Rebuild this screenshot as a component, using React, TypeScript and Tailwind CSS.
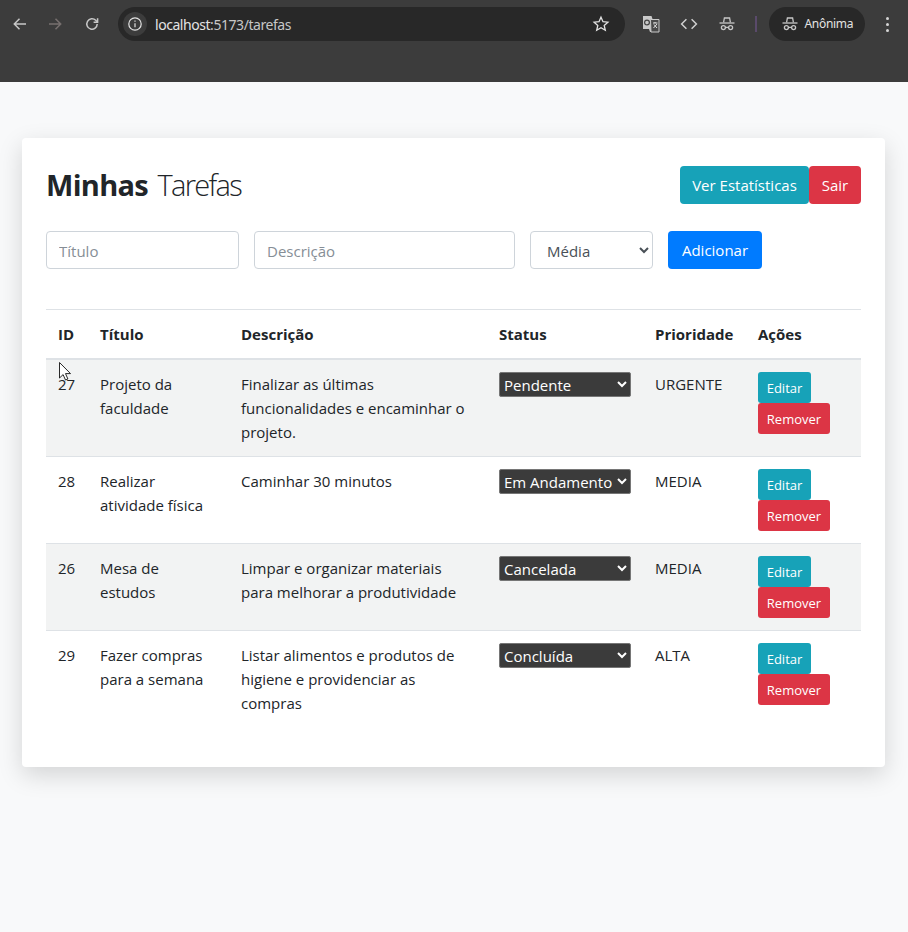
import React from "react";

const Incognito = ({ size = 18, color = "#c7c7c7" }: { size?: number; color?: string }) => (
  <svg width={size} height={size} viewBox="0 0 18 18" fill="none" stroke={color} strokeWidth="1.3">
    <path d="M5.6 7.4 L6.4 3 H11.6 L12.4 7.4" />
    <path d="M1.5 8 H16.5" />
    <circle cx="5.4" cy="12.6" r="2" />
    <circle cx="12.6" cy="12.6" r="2" />
    <path d="M7.4 12.4 H10.6" />
  </svg>
);

const rows = [
  { id: 27, t: "Projeto da faculdade", d: "Finalizar as últimas funcionalidades e encaminhar o projeto.", s: "Pendente", p: "URGENTE", shade: true },
  { id: 28, t: "Realizar atividade física", d: "Caminhar 30 minutos", s: "Em Andamento", p: "MEDIA", shade: false },
  { id: 26, t: "Mesa de estudos", d: "Limpar e organizar materiais para melhorar a produtividade", s: "Cancelada", p: "MEDIA", shade: true },
  { id: 29, t: "Fazer compras para a semana", d: "Listar alimentos e produtos de higiene e providenciar as compras", s: "Concluída", p: "ALTA", shade: false },
];

const statuses = ["Pendente", "Em Andamento", "Cancelada", "Concluída"];

function BrowserBar() {
  return (
    <div className="h-[82px] bg-[#3c3c3c] flex items-start pt-[7px] pl-[11px] pr-[14px] text-[#e3e3e3]">
      <div className="flex items-center h-[34px] gap-[17px]">
        <svg width="18" height="18" viewBox="0 0 18 18" fill="none" stroke="#c7c7c7" strokeWidth="1.5"><path d="M15 9H3.5M8.5 3.8 3.3 9l5.2 5.2" /></svg>
        <svg width="18" height="18" viewBox="0 0 18 18" fill="none" stroke="#77706f" strokeWidth="1.5"><path d="M3 9h11.5M9.5 3.8 14.7 9l-5.2 5.2" /></svg>
        <svg className="ml-[2px]" width="18" height="18" viewBox="0 0 18 18" fill="none" stroke="#c7c7c7" strokeWidth="1.5"><path d="M14.2 9a5.2 5.2 0 1 1-1.5-3.7L14.4 7" /><path d="M14.6 3.2V7.2H10.6" /></svg>
      </div>
      <div className="ml-[17px] w-[507px] h-[34px] rounded-full bg-[#282828] flex items-center pl-[5px] pr-[15px]">
        <div className="w-[24px] h-[24px] rounded-full bg-[#3c3c3c] flex items-center justify-center">
          <svg width="16" height="16" viewBox="0 0 16 16" fill="none" stroke="#e3e3e3" strokeWidth="1.2"><circle cx="8" cy="8" r="6.2" /><path d="M8 7.2v4M8 4.4v1.4" /></svg>
        </div>
        <span className="ml-[8px] text-[14px] text-[#e3e3e3] font-['Noto_Sans',sans-serif] tracking-[-0.45px]">localhost<span className="text-[#c7c7c7]">:5173/tarefas</span></span>
        <svg className="ml-auto" width="18" height="18" viewBox="0 0 18 18" fill="none" stroke="#e3e3e3" strokeWidth="1.3"><path d="M9 2.2l2 4.5 4.9.5-3.7 3.3 1.1 4.8L9 12.8l-4.3 2.5 1.1-4.8L2.1 7.2 7 6.7z" /></svg>
      </div>
      <div className="ml-[17px] h-[34px] flex items-center">
        <svg width="18" height="18" viewBox="0 0 18 18"><path d="M1 1h8.5l1 3H17v13H8l-1-3H1z" fill="#c9c9c9" /><path d="M8.5 4.5H17V17H9z" fill="#4a4a4a" stroke="#c9c9c9" /><circle cx="5" cy="7.5" r="2.4" fill="none" stroke="#444" strokeWidth="1.2" /><path d="M11 8h4.5M13 7v1M11.5 13l3.5-4M12 9.5l3 3.5" stroke="#e3e3e3" strokeWidth="1" fill="none" /></svg>
        <svg className="ml-[20px]" width="18" height="18" viewBox="0 0 18 18" fill="none" stroke="#d0d0d0" strokeWidth="1.5"><path d="M6.4 4.2 1.6 9l4.8 4.8M11.6 4.2 16.4 9l-4.8 4.8" /></svg>
        <span className="ml-[20px] flex"><Incognito /></span>
        <div className="ml-[19px] w-[1.5px] h-[16px] bg-[#5a4a6b]" />
      </div>
      <div className="ml-[12px] w-[96px] h-[34px] rounded-full bg-[#282828] flex items-center pl-[12px] gap-[6px]">
        <Incognito />
        <span className="text-[12px] text-[#e3e3e3] font-['Noto_Sans',sans-serif] tracking-[-0.3px]">Anônima</span>
      </div>
      <div className="ml-[21px] h-[34px] flex flex-col items-center justify-center gap-[3px]">
        <span className="w-[3px] h-[3px] rounded-full bg-[#d5d5d5]" />
        <span className="w-[3px] h-[3px] rounded-full bg-[#d5d5d5]" />
        <span className="w-[3px] h-[3px] rounded-full bg-[#d5d5d5]" />
      </div>
    </div>
  );
}

export default function App() {
  return (
    <div className="w-[908px] h-[932px] overflow-hidden bg-[#f8f9fa] relative font-['Open_Sans','Noto_Sans',sans-serif] text-[#212529]">
      <BrowserBar />
      <div className="mt-[56px] mx-[22px] w-[863px] h-[629px] bg-white rounded-[4px] shadow-[0_8px_24px_rgba(0,0,0,0.15)] pt-[28px] px-[24px]">
        <div className="flex items-center justify-between h-[38px]">
          <h1 className="text-[29px] leading-[38px] font-['Open_Sans',sans-serif]">
            <span className="font-bold tracking-[-0.7px]">Minhas</span> <span className="font-light tracking-[-1.7px] ml-[2px]">Tarefas</span>
          </h1>
          <div className="flex">
            <button className="h-[38px] w-[129px] bg-[#17a2b8] text-white text-[15px] rounded-[4px]">Ver Estatísticas</button>
            <button className="h-[38px] w-[52px] bg-[#dc3545] text-white text-[15px] rounded-[4px]">Sair</button>
          </div>
        </div>
        <div className="flex mt-[27px] h-[38px]">
          <input placeholder="Título" className="w-[193px] h-[38px] border border-[#ced4da] rounded-[4px] px-[12px] pt-[1px] text-[15px] placeholder:text-[#868e96] outline-none" />
          <input placeholder="Descrição" className="ml-[15px] w-[261px] h-[38px] border border-[#ced4da] rounded-[4px] px-[12px] pt-[1px] text-[15px] placeholder:text-[#868e96] outline-none" />
          <select defaultValue="Média" className="ml-[15px] w-[123px] h-[38px] border border-[#ced4da] rounded-[4px] pl-[12px] pt-[1px] text-[15px] text-[#495057] bg-white outline-none">
            <option>Média</option>
          </select>
          <button className="ml-[15px] w-[94px] h-[38px] bg-[#007bff] text-white text-[15px] rounded-[4px]">Adicionar</button>
        </div>
        <table className="mt-[40px] w-[815px] table-fixed border-collapse text-[15px] leading-[24px]">
          <colgroup>
            <col className="w-[42px]" />
            <col className="w-[141px]" />
            <col className="w-[258px]" />
            <col className="w-[156px]" />
            <col className="w-[103px]" />
            <col className="w-[115px]" />
          </colgroup>
          <thead>
            <tr className="border-t border-[#dee2e6] border-b-2 h-[49px]">
              {["ID", "Título", "Descrição", "Status", "Prioridade", "Ações"].map((h) => (
                <th key={h} className="px-[12px] text-left align-middle font-bold whitespace-nowrap">{h}</th>
              ))}
            </tr>
          </thead>
          <tbody>
            {rows.map((r, i) => (
              <tr key={r.id} className={`${r.shade ? "bg-[#f2f3f3]" : "bg-white"} ${i < 3 ? "border-b border-[#dee2e6]" : ""} align-top`}>
                <td className="px-[12px] py-[12px]">{r.id}</td>
                <td className="px-[12px] py-[12px]">{r.t}</td>
                <td className="px-[12px] py-[12px]">{r.d}</td>
                <td className="px-[12px] py-[12px]">
                  <select defaultValue={r.s} className="block w-[132px] h-[25px] pt-[1px] bg-[#3b3b3b] text-white border border-[#767676] rounded-[2px] text-[15px]">
                    {statuses.map((s) => <option key={s}>{s}</option>)}
                  </select>
                </td>
                <td className="px-[12px] py-[12px]">{r.p}</td>
                <td className="px-[12px] py-[12px]">
                  <button className="block w-[53px] h-[31px] pt-[1px] bg-[#17a2b8] text-white text-[13px] rounded-[3px]">Editar</button>
                  <button className="block w-[72px] h-[31px] pt-[1px] bg-[#dc3545] text-white text-[13px] rounded-[3px]">Remover</button>
                </td>
              </tr>
            ))}
          </tbody>
        </table>
      </div>
      <svg className="absolute left-[59px] top-[362px]" width="13" height="20" viewBox="0 0 13 20">
        <path d="M0.5 0.5V16l3.6-3.4 2.4 5.4 2.4-1-2.4-5.4h5z" fill="#fff" stroke="#111" strokeWidth="0.9" />
      </svg>
    </div>
  );
}
